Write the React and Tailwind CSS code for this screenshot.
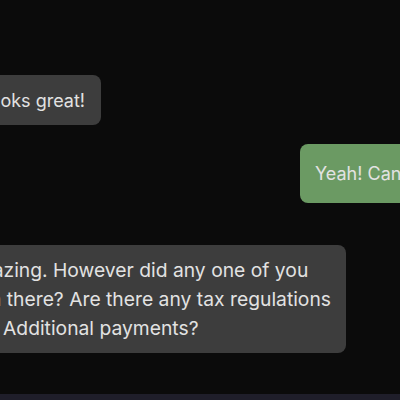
export default function App() {
  return (
    <div className="w-[400px] h-[400px] overflow-hidden bg-[#0b0b0b] flex flex-col font-['Inter',sans-serif] text-[18px] leading-[29px] text-[#e2e2e2]">
      {/* Chat thread */}
      <div className="flex-1 flex flex-col pt-[75px]">
        {/* Incoming */}
        <div className="w-[101px] flex justify-end">
          <div className="shrink-0 whitespace-nowrap bg-[#3d3d3d] rounded-lg px-4 py-[10.5px]">Looks great!</div>
        </div>

        {/* Outgoing */}
        <div className="mt-[19px] ml-[300px] shrink-0 w-max whitespace-nowrap bg-[#6b9a63] rounded-lg px-[15px] py-[15px]">
          Yeah! Can't wait to go there
        </div>

        {/* Incoming */}
        <div className="mt-[42px] w-[346px] flex justify-end">
          <div className="shrink-0 whitespace-nowrap bg-[#3d3d3d] rounded-lg pl-4 pr-[15px] py-[10.5px] text-[19.3px]">
            Wow, amazing. However did any one of you
            <br />
            ever been there? Are there any tax regulations
            <br />
            and other Additional payments?
          </div>
        </div>
      </div>

      {/* Composer edge */}
      <div className="h-[6px] bg-[#1f1e2a]" />
    </div>
  );
}
